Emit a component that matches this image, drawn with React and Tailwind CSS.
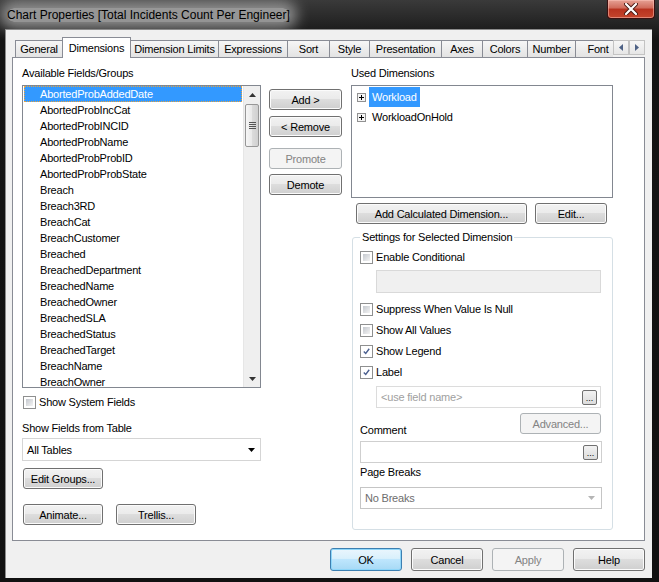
import React from 'react';

const fields = [
  'AbortedProbAddedDate', 'AbortedProbIncCat', 'AbortedProbINCID', 'AbortedProbName',
  'AbortedProbProbID', 'AbortedProbProbState', 'Breach', 'Breach3RD', 'BreachCat',
  'BreachCustomer', 'Breached', 'BreachedDepartment', 'BreachedName', 'BreachedOwner',
  'BreachedSLA', 'BreachedStatus', 'BreachedTarget', 'BreachName', 'BreachOwner',
];

const tabs = [
  ['General', 48], ['Dimensions', 69], ['Dimension Limits', 89], ['Expressions', 70],
  ['Sort', 43], ['Style', 41], ['Presentation', 73], ['Axes', 42], ['Colors', 46],
  ['Number', 49], ['Font', 46],
];

// Win7 style push button
const Btn = ({ children, className = '', disabled, def }) => {
  let look = 'border-[#707070] bg-[linear-gradient(#f2f2f2,#ebebeb_45%,#dddddd_50%,#cfcfcf)] shadow-[inset_0_0_0_1px_#fbfbfb]';
  if (def) look = 'border-[#3c7fb1] bg-[linear-gradient(#eaf6fd,#d9f0fc_45%,#bee6fd_50%,#a7d9f5)] shadow-[inset_0_0_0_1px_#8ed6f9]';
  if (disabled) look = 'border-[#adb2b5] bg-[#f4f4f4] text-[#838383]';
  return (
    <div className={`flex items-center justify-center rounded-[3px] border ${look} ${className}`}>
      {children}
    </div>
  );
};

const Check = ({ checked, label }) => (
  <div className="flex h-[14px] items-center">
    <span className="flex h-[13px] w-[13px] items-center justify-center border border-[#8e8f8f] bg-white p-[2px]">
      {checked ? (
        <svg width="9" height="9" viewBox="0 0 9 9">
          <path d="M1 4.5 L3.5 7 L8 1" fill="none" stroke="#4a5f8f" strokeWidth="1.8" />
        </svg>
      ) : (
        <span className="block h-full w-full bg-[linear-gradient(135deg,#c4c8ce,#f4f4f4)]" />
      )}
    </span>
    <span className="ml-[3px]">{label}</span>
  </div>
);

const Arrow = ({ color = '#000', up }) => (
  <svg width="7" height="4" viewBox="0 0 7 4">
    <path d={up ? 'M0 4h7L3.5 0z' : 'M0 0h7L3.5 4z'} fill={color} />
  </svg>
);

const Dots = () => (
  <div className="flex h-[15px] w-[15px] items-end justify-center rounded-[2px] border border-[#707070] bg-[linear-gradient(#f2f2f2,#dcdcdc)] pb-[1px] text-[9px] leading-[9px] tracking-normal">
    ...
  </div>
);

const PlusBox = () => (
  <svg width="9" height="9" viewBox="0 0 9 9">
    <rect x="0.5" y="0.5" width="8" height="8" fill="#f4f4f4" stroke="#919191" />
    <path d="M2 4.5h5M4.5 2v5" stroke="#000" />
  </svg>
);

function Scrollbar() {
  return (
    <div className="flex w-[17px] flex-col border-l border-[#e6e6e6] bg-[#efefef]">
      <div className="flex h-[17px] items-center justify-center"><Arrow up color="#333" /></div>
      <div className="ml-px mt-[1px] flex h-[43px] w-[14px] flex-col items-center justify-center gap-[1px] rounded-[2px] border border-[#979797] bg-[linear-gradient(90deg,#f6f6f6,#e9e9e9_50%,#dcdcdc_50%,#d0d0d0)]">
        <span className="block h-px w-[7px] bg-[#555]" />
        <span className="block h-px w-[7px] bg-[#555]" />
        <span className="block h-px w-[7px] bg-[#555]" />
        <span className="block h-px w-[7px] bg-[#555]" />
      </div>
      <div className="flex-1" />
      <div className="flex h-[17px] items-center justify-center"><Arrow color="#333" /></div>
    </div>
  );
}

function LeftColumn() {
  return (
    <div className="ml-[9px] flex w-[239px] flex-col">
      <div className="mt-[8px] h-[14px]">Available Fields/Groups</div>
      <div className="mt-[5px] flex h-[303px] border border-[#828790] bg-white">
        <div className="flex-1 overflow-hidden">
          {fields.map((f, i) =>
            i === 0 ? (
              <div key={f} className="ml-px mr-px h-4 bg-[#3399ff] pl-4 leading-4 text-white outline-1 -outline-offset-1 outline-dotted outline-[#e8a33d]">{f}</div>
            ) : (
              <div key={f} className="h-4 pl-[17px] leading-4">{f}</div>
            )
          )}
        </div>
        <Scrollbar />
      </div>
      <div className="ml-px mt-[7px]"><Check label="Show System Fields" /></div>
      <div className="mt-[12px] h-[14px]">Show Fields from Table</div>
      <div className="mt-[3px] flex h-[23px] items-center justify-between border border-[#d5d5d5] bg-white pl-[4px] pr-[5px]">
        <span>All Tables</span>
        <Arrow />
      </div>
      <Btn className="ml-px mt-[7px] h-[21px] w-[80px]">Edit Groups...</Btn>
      <div className="ml-px mt-[15px] flex gap-[13px]">
        <Btn className="h-[21px] w-[80px]">Animate...</Btn>
        <Btn className="h-[21px] w-[80px]">Trellis...</Btn>
      </div>
    </div>
  );
}

function MiddleColumn() {
  return (
    <div className="ml-[8px] flex w-[73px] flex-col">
      <Btn className="mt-[31px] h-[21px]">Add &gt;</Btn>
      <Btn className="mt-[6px] h-[21px]">&lt; Remove</Btn>
      <Btn disabled className="mt-[11px] h-[21px]">Promote</Btn>
      <Btn className="mt-[5px] h-[21px]">Demote</Btn>
    </div>
  );
}

function RightColumn() {
  return (
    <div className="ml-[9px] flex w-[262px] flex-col">
      <div className="mt-[8px] h-[14px]">Used Dimensions</div>
      <div className="mt-[5px] h-[113px] border border-[#828790] bg-white pt-[1px]">
        {['Workload', 'WorkloadOnHold'].map((d, i) => (
          <div key={d} className="flex h-[20px] items-center pl-[5px]">
            <PlusBox />
            <span className={`ml-[3px] flex h-[20px] items-center px-[3px] ${i === 0 ? 'bg-[#3399ff] text-white' : ''}`}>{d}</span>
          </div>
        ))}
      </div>
      <div className="ml-[5px] mt-[5px] flex gap-[8px]">
        <Btn className="h-[21px] w-[171px]">Add Calculated Dimension...</Btn>
        <Btn className="h-[21px] w-[72px]">Edit...</Btn>
      </div>
      <fieldset className="ml-px mt-[6px] h-[300px] w-[261px] rounded-[3px] border border-[#d5dfe5] pl-[7px]">
        <legend className="h-[14px] px-[2px]">Settings for Selected Dimension</legend>
        <div className="mt-[6px]"><Check label="Enable Conditional" /></div>
        <div className="ml-[16px] mt-[6px] h-[23px] w-[225px] border border-[#d9d9d9] bg-[#f0f0f0]" />
        <div className="mt-[9px]"><Check label="Suppress When Value Is Null" /></div>
        <div className="mt-[7px]"><Check label="Show All Values" /></div>
        <div className="mt-[7px]"><Check checked label="Show Legend" /></div>
        <div className="mt-[7px]"><Check checked label="Label" /></div>
        <div className="ml-[16px] mt-[7px] flex h-[22px] w-[225px] items-center justify-between border border-[#dcdcdc] bg-white pl-[4px] pr-[3px]">
          <span className="text-[#a0a0a0]">&lt;use field name&gt;</span>
          <Dots />
        </div>
        <div className="mt-[5px] flex h-[24px] w-[241px] justify-between">
          <span className="self-end leading-[14px]">Comment</span>
          <Btn disabled className="h-[21px] w-[81px]">Advanced...</Btn>
        </div>
        <div className="mt-[4px] flex h-[22px] w-[242px] items-center justify-end border border-[#cfcfcf] bg-white pr-[3px]">
          <Dots />
        </div>
        <div className="mt-[2px] h-[14px]">Page Breaks</div>
        <div className="mt-[8px] flex h-[22px] w-[242px] items-center justify-between border border-[#c5c5c5] bg-white pl-[4px] pr-[6px] text-[#6d6d6d]">
          <span>No Breaks</span>
          <Arrow color="#b5b5b5" />
        </div>
      </fieldset>
    </div>
  );
}

function TabStrip() {
  return (
    <div className="relative z-10 -mb-px flex h-[21px] items-end">
      <div className="ml-[3px] flex h-[21px] w-[600px] items-end overflow-hidden">
        {tabs.map(([t, w], i) =>
          i === 1 ? (
            <div key={t} style={{ width: w }} className="relative z-10 -ml-px flex h-[21px] shrink-0 justify-center border border-b-0 border-[#898c95] bg-white pt-[3px]">{t}</div>
          ) : (
            <div key={t} style={{ width: w }} className={`flex h-[18px] shrink-0 justify-center border border-[#898c95] bg-[linear-gradient(#f6f6f6,#e3e3e3)] pt-[1px] ${i === 0 ? '' : '-ml-px'}`}>{t}</div>
          )
        )}
      </div>
      <div className="mb-[3px] flex">
        {[true, false].map((left) => (
          <div key={String(left)} className="flex h-[15px] w-[16px] items-center justify-center border border-[#c3c3c3] bg-[linear-gradient(#f6f6f6,#e6e6e6)]">
            <svg width="4" height="7" viewBox="0 0 4 7">
              <path d={left ? 'M4 0v7L0 3.5z' : 'M0 0v7L4 3.5z'} fill="#4d6185" />
            </svg>
          </div>
        ))}
      </div>
    </div>
  );
}

export default function App() {
  return (
    <div className="flex h-[582px] w-[659px] flex-col bg-[linear-gradient(#3a3a3a,#141414_40px,#111)] font-['Liberation_Sans',Arial,sans-serif] text-[11px] leading-[14px] tracking-[-0.2px] text-black">
      {/* title bar */}
      <div className="flex h-[29px] shrink-0">
        <div className="ml-[7px] self-center">
          <span className="rounded-[10px] bg-[rgba(185,185,185,0.75)] text-[12px] tracking-normal shadow-[0_0_14px_7px_rgba(185,185,185,0.7)]">
            Chart Properties [Total Incidents Count Per Engineer]
          </span>
        </div>
        <div className="mr-[4px] ml-auto flex h-[19px] w-[48px] items-center justify-center rounded-b-[4px] border border-t-0 border-[#3a1010] bg-[linear-gradient(#e6a195,#d06a5a_45%,#b7321f_50%,#c4452d)] shadow-[inset_0_0_0_1px_rgba(255,200,190,0.5)]">
          <svg width="14" height="12" viewBox="0 0 14 12">
            <path d="M2 1 L12 11 M12 1 L2 11" stroke="#4a1a14" strokeWidth="4" strokeLinecap="round" />
            <path d="M2 1 L12 11 M12 1 L2 11" stroke="#fff" strokeWidth="2.2" strokeLinecap="round" />
          </svg>
        </div>
      </div>

      {/* client area */}
      <div className="ml-[5px] mr-[7px] flex h-[549px] flex-col border-l border-t border-[#8c8c8c] bg-[#f0f0f0] pl-[6px] pt-[7px]">
        <div className="w-[633px]">
          <TabStrip />
          <div className="flex h-[484px] border border-[#898c95] bg-white">
            <LeftColumn />
            <MiddleColumn />
            <RightColumn />
          </div>
        </div>
        <div className="mt-[7px] flex gap-[9px] pl-[318px]">
          <Btn def className="h-[23px] w-[72px]">OK</Btn>
          <Btn className="h-[23px] w-[72px]">Cancel</Btn>
          <Btn disabled className="h-[23px] w-[72px]">Apply</Btn>
          <Btn className="h-[23px] w-[72px]">Help</Btn>
        </div>
      </div>
    </div>
  );
}
